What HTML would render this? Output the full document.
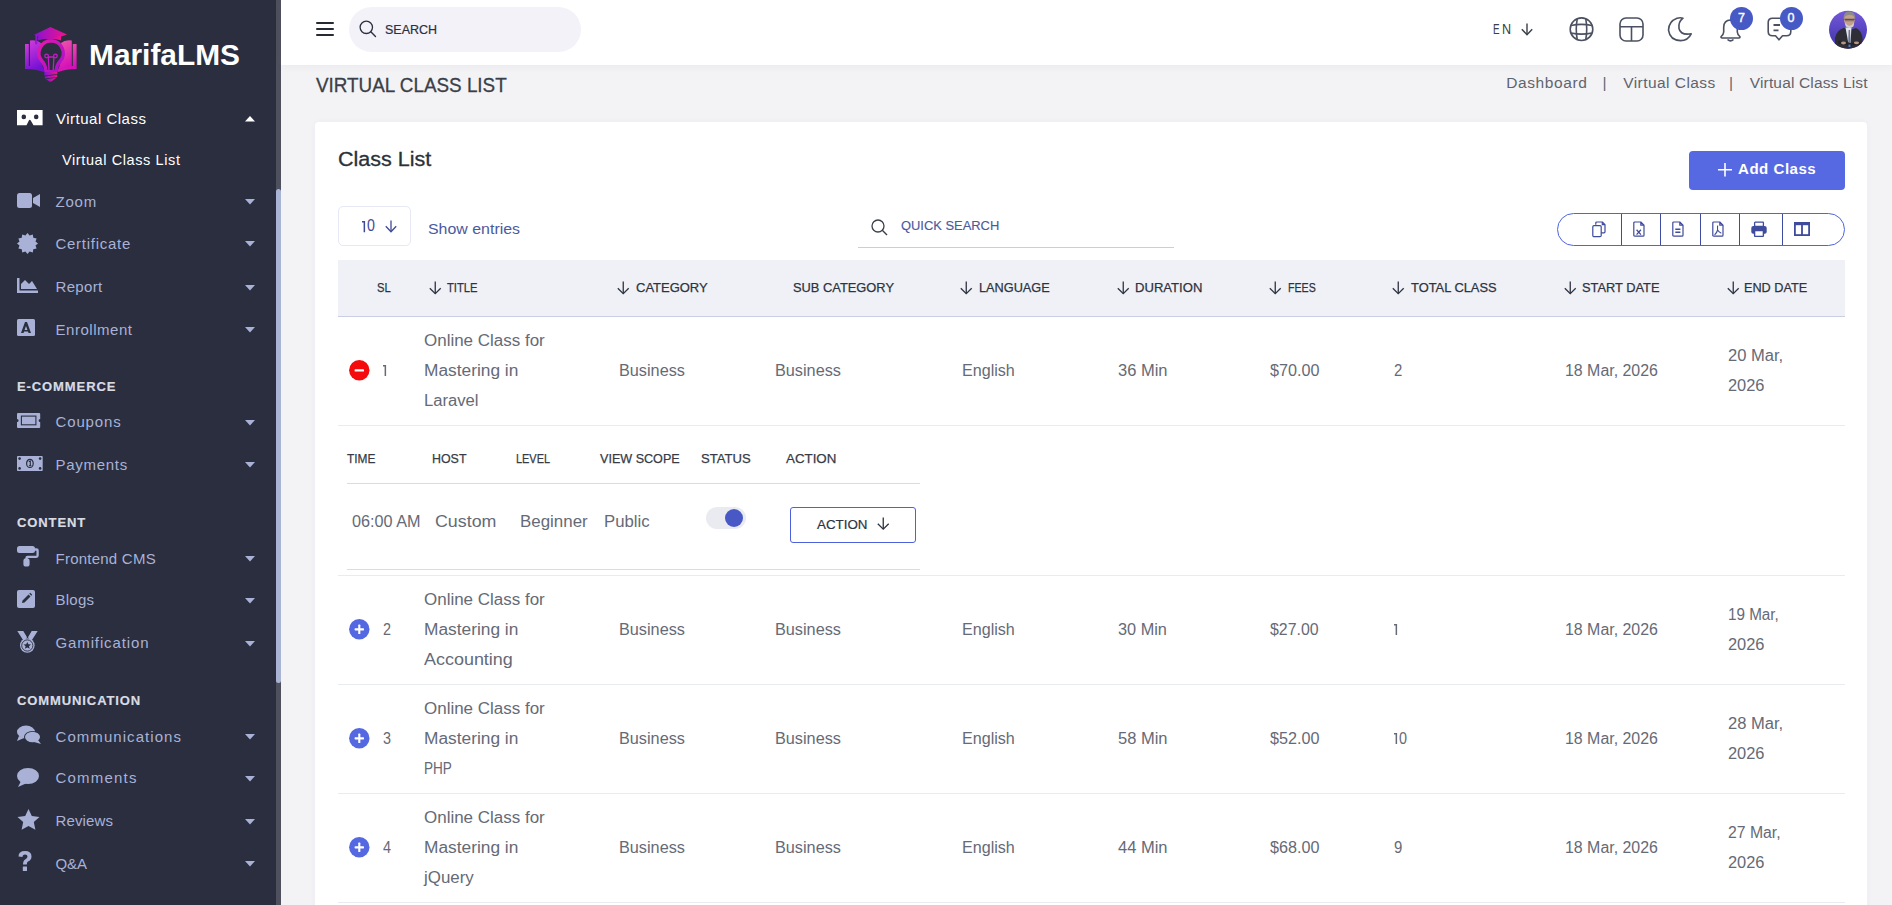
<!DOCTYPE html>
<html><head><meta charset="utf-8"><title>Virtual Class List</title>
<style>
html,body{margin:0;padding:0;}
body{width:1892px;height:905px;overflow:hidden;position:relative;background:#f3f3f6;font-family:"Liberation Sans",sans-serif;}
.t{position:absolute;line-height:1;white-space:nowrap;}
.b{position:absolute;}
svg.b{overflow:visible;}
</style></head><body>
<div class="b" style="left:0px;top:0px;width:276px;height:905px;background:#2a2e3f;"></div>
<div class="b" style="left:276px;top:0px;width:5px;height:905px;background:#4e515d;"></div>
<div class="b" style="left:276px;top:189px;width:5px;height:494px;background:#a9b3d4;border-radius:3px;"></div>
<svg class="b" style="left:20px;top:22px;" width="62" height="64" viewBox="0 0 62 64">
<defs>
<linearGradient id="lg1" x1="0" y1="0" x2="1" y2="0"><stop offset="0" stop-color="#8413d2"/><stop offset="1" stop-color="#f4128f"/></linearGradient>
<linearGradient id="lgL" x1="0" y1="0" x2="0.3" y2="1"><stop offset="0" stop-color="#d03bdc"/><stop offset="1" stop-color="#7410d4"/></linearGradient>
<linearGradient id="lgR" x1="0" y1="0" x2="0.3" y2="1"><stop offset="0" stop-color="#f45aa8"/><stop offset="1" stop-color="#d410b8"/></linearGradient>
<linearGradient id="lgB" x1="0" y1="0" x2="1" y2="1"><stop offset="0" stop-color="#e81aa8"/><stop offset="1" stop-color="#a012d0"/></linearGradient>
</defs>
<path d="M5 22 H8.8 V44 Q18 44 25 49 L24 50 Q16 47 5 47 Z" fill="url(#lgL)"/>
<path d="M56.6 22 H52.8 V44 Q43 44 37 49 L38 50 Q46 47 56.6 47 Z" fill="url(#lgR)"/>
<path d="M10 18.5 Q17 17.5 21 21 L21 38 Q22 45 25 49 Q18 45 10 45 Z" fill="url(#lgL)"/>
<path d="M51.8 18.5 Q45 17.5 41 21 L41 38 Q40 45 37 49 Q44 45 51.8 45 Z" fill="url(#lgR)"/>
<path d="M31.1 17.3 A13.8 13.8 0 0 1 41.5 40.2 Q38 44 37.5 50 H24.5 Q24 44 20.6 40.2 A13.8 13.8 0 0 1 31.1 17.3 Z" fill="url(#lgB)"/>
<path d="M31.1 20.8 A10.3 10.3 0 0 1 39 37.8 Q35 42 34.5 48 H27.5 Q27 42 23.2 37.8 A10.3 10.3 0 0 1 31.1 20.8 Z" fill="#2a2e3f"/>
<g fill="none" stroke="#c41cc8" stroke-width="1.3"><circle cx="26.6" cy="34" r="1.8"/><circle cx="35.4" cy="34" r="1.8"/><path d="M28.3 35 L29 48 M33.9 35 L33.2 48 M28.3 35 H33.9"/></g>
<path d="M24.4 50 H37.4 V52 L24.4 53.6 Z M24.8 54.4 L37.2 52.8 V55 L24.8 56.6 Z M26 57.2 L36.2 55.8 L31.5 59.5 L29.5 59.5 Z" fill="url(#lg1)"/>
<path d="M14.1 12.7 L30.4 5 L47 12.4 L30.4 18.5 Z" fill="url(#lg1)"/>
<path d="M17.5 13.5 V18.5 Q30 14.5 41 18.5 V13.5 L30.4 17.5 Z" fill="url(#lg1)"/>
<path d="M16.2 13 V20" stroke="#9a1ad0" stroke-width="1.4"/><ellipse cx="16.2" cy="20.5" rx="1.3" ry="2" fill="#9a1ad0"/>
</svg>
<span class="t" style="left:89.0px;top:39.61px;font-size:30px;color:#ffffff;font-weight:700;transform:scaleX(0.9954);transform-origin:0 0;">MarifaLMS</span>
<svg class="b" style="left:16.7px;top:109.8px;" width="26" height="16" viewBox="0 0 26 16"><path d="M0 0 H25.6 V15.2 H16.5 L13.6 10.3 Q12.8 9 12 10.3 L9.5 15.2 H0 Z" fill="#fff"/><circle cx="6.8" cy="6.9" r="2.3" fill="#2a2e3f"/><circle cx="19.2" cy="6.9" r="2.3" fill="#2a2e3f"/></svg>
<span class="t" style="left:56.0px;top:111.00px;font-size:15px;color:#ffffff;letter-spacing:0.5px;">Virtual Class</span>
<svg class="b" style="left:245px;top:115.5px;" width="10" height="6" viewBox="0 0 10 6"><path d="M0 5.5 L10 5.5 L5 0 Z" fill="#ffffff"/></svg>
<span class="t" style="left:62.0px;top:152.73px;font-size:14.5px;color:#ffffff;letter-spacing:0.6px;">Virtual Class List</span>
<span class="t" style="left:55.5px;top:194.00px;font-size:15px;color:#a9b2d6;letter-spacing:0.8px;">Zoom</span>
<svg class="b" style="left:245px;top:199.39999999999998px;" width="10" height="6" viewBox="0 0 10 6"><path d="M0 0 L10 0 L5 5.5 Z" fill="#a9b2d6"/></svg>
<svg class="b" style="left:17px;top:193px;" width="24" height="16" viewBox="0 0 24 16"><g fill="#a9b2d6"><rect x="0" y="0" width="15" height="15" rx="2.5"/><path d="M16 5 L23 1 V14 L16 10 Z"/></g></svg>
<span class="t" style="left:55.5px;top:236.00px;font-size:15px;color:#a9b2d6;letter-spacing:0.72px;">Certificate</span>
<svg class="b" style="left:245px;top:241.39999999999998px;" width="10" height="6" viewBox="0 0 10 6"><path d="M0 0 L10 0 L5 5.5 Z" fill="#a9b2d6"/></svg>
<svg class="b" style="left:17px;top:233px;" width="21" height="21" viewBox="0 0 21 21"><g fill="#a9b2d6"><path d="M10.5 0 L12.6 2.6 L15.8 1.5 L16.3 4.8 L19.6 5.4 L18.5 8.5 L21 10.5 L18.5 12.5 L19.6 15.6 L16.3 16.2 L15.8 19.5 L12.6 18.4 L10.5 21 L8.4 18.4 L5.2 19.5 L4.7 16.2 L1.4 15.6 L2.5 12.5 L0 10.5 L2.5 8.5 L1.4 5.4 L4.7 4.8 L5.2 1.5 L8.4 2.6 Z"/></g></svg>
<span class="t" style="left:55.5px;top:279.30px;font-size:15px;color:#a9b2d6;letter-spacing:0.35px;">Report</span>
<svg class="b" style="left:245px;top:284.7px;" width="10" height="6" viewBox="0 0 10 6"><path d="M0 0 L10 0 L5 5.5 Z" fill="#a9b2d6"/></svg>
<svg class="b" style="left:17px;top:278px;" width="21" height="15" viewBox="0 0 21 15"><g fill="#a9b2d6"><path d="M0 0 H2.5 V12.5 H21 V15 H0 Z"/><path d="M4 11 V6 L8 2 L12 6 L15 3 L20 11 Z"/></g></svg>
<span class="t" style="left:55.5px;top:321.50px;font-size:15px;color:#a9b2d6;letter-spacing:0.53px;">Enrollment</span>
<svg class="b" style="left:245px;top:326.9px;" width="10" height="6" viewBox="0 0 10 6"><path d="M0 0 L10 0 L5 5.5 Z" fill="#a9b2d6"/></svg>
<svg class="b" style="left:17px;top:319px;" width="18" height="18" viewBox="0 0 18 18"><g fill="#a9b2d6"><rect x="0" y="0" width="18" height="17" rx="1.5"/><path d="M4 14 L8 3 H10 L14 14 H11.5 L9 7 L6.5 14 Z M7 11 H11 V12.5 H7 Z" fill="#2a2e3f"/></g></svg>
<span class="t" style="left:55.5px;top:414.10px;font-size:15px;color:#a9b2d6;letter-spacing:0.86px;">Coupons</span>
<svg class="b" style="left:245px;top:419.5px;" width="10" height="6" viewBox="0 0 10 6"><path d="M0 0 L10 0 L5 5.5 Z" fill="#a9b2d6"/></svg>
<svg class="b" style="left:17px;top:413px;" width="24" height="16" viewBox="0 0 24 16"><g fill="#a9b2d6"><path d="M1 0 H22.2 Q23.2 0 23.2 1 V5.9 A1.6 1.6 0 0 0 23.2 9.1 V14 Q23.2 15 22.2 15 H1 Q0 15 0 14 V9.1 A1.6 1.6 0 0 0 0 5.9 V1 Q0 0 1 0 Z"/><rect x="4.4" y="3.1" width="14.5" height="8.7" fill="none" stroke="#2a2e3f" stroke-width="1.1"/></g></svg>
<span class="t" style="left:55.5px;top:456.90px;font-size:15px;color:#a9b2d6;letter-spacing:0.72px;">Payments</span>
<svg class="b" style="left:245px;top:462.3px;" width="10" height="6" viewBox="0 0 10 6"><path d="M0 0 L10 0 L5 5.5 Z" fill="#a9b2d6"/></svg>
<svg class="b" style="left:17px;top:456px;" width="26" height="16" viewBox="0 0 26 16"><g fill="#a9b2d6"><rect x="0" y="0" width="25.7" height="15" rx="0.8"/><g fill="#2a2e3f"><circle cx="2.6" cy="2.6" r="1.3"/><circle cx="23.1" cy="2.6" r="1.3"/><circle cx="2.6" cy="12.4" r="1.3"/><circle cx="23.1" cy="12.4" r="1.3"/></g><ellipse cx="12.9" cy="7.4" rx="3.3" ry="4.1" fill="none" stroke="#2a2e3f" stroke-width="1.2"/><path d="M11.8 5.6 L13.3 5 V9.8 M11.9 9.8 H14.4" fill="none" stroke="#2a2e3f" stroke-width="1.1"/></g></svg>
<span class="t" style="left:55.5px;top:550.50px;font-size:15px;color:#a9b2d6;letter-spacing:0.24px;">Frontend CMS</span>
<svg class="b" style="left:245px;top:555.9000000000001px;" width="10" height="6" viewBox="0 0 10 6"><path d="M0 0 L10 0 L5 5.5 Z" fill="#a9b2d6"/></svg>
<svg class="b" style="left:17px;top:546px;" width="22" height="22" viewBox="0 0 22 22"><g fill="#a9b2d6"><rect x="0" y="0" width="18" height="7" rx="2.5"/><path d="M17 3.5 H19.6 Q20.6 3.5 20.6 4.5 V9.5 Q20.6 10.8 19.3 10.8 H10.6 Q9.5 10.8 9.5 12 V13.5" stroke="#a9b2d6" stroke-width="2.3" fill="none"/><rect x="6.4" y="12.3" width="6.2" height="8.3" rx="2.6"/></g></svg>
<span class="t" style="left:55.5px;top:592.40px;font-size:15px;color:#a9b2d6;letter-spacing:0.25px;">Blogs</span>
<svg class="b" style="left:245px;top:597.8000000000001px;" width="10" height="6" viewBox="0 0 10 6"><path d="M0 0 L10 0 L5 5.5 Z" fill="#a9b2d6"/></svg>
<svg class="b" style="left:17px;top:590px;" width="18" height="18" viewBox="0 0 18 18"><g fill="#a9b2d6"><rect x="0" y="0" width="18" height="18" rx="2"/><path d="M5 13 L5.5 10.5 L11.5 4.5 L13.5 6.5 L7.5 12.5 Z M12.3 3.7 L13.2 2.8 L15.2 4.8 L14.3 5.7 Z" fill="#2a2e3f"/></g></svg>
<span class="t" style="left:55.5px;top:635.40px;font-size:15px;color:#a9b2d6;letter-spacing:0.88px;">Gamification</span>
<svg class="b" style="left:245px;top:640.8000000000001px;" width="10" height="6" viewBox="0 0 10 6"><path d="M0 0 L10 0 L5 5.5 Z" fill="#a9b2d6"/></svg>
<svg class="b" style="left:17px;top:631px;" width="21" height="22" viewBox="0 0 21 22"><g fill="#a9b2d6"><path d="M0.3 0 H6.3 L10 6.2 L8.6 8.3 Q7.2 8.6 6.2 9.3 Z"/><path d="M20.7 0 H14.7 L11 6.2 L12.4 8.3 Q13.8 8.6 14.8 9.3 Z"/><circle cx="10.3" cy="14.5" r="7.3"/><circle cx="10.3" cy="14.5" r="5.6" fill="none" stroke="#2a2e3f" stroke-width="0.9"/><path d="M10.3 10.9 L11.4 13.3 L14 13.5 L12 15.2 L12.7 17.8 L10.3 16.4 L7.9 17.8 L8.6 15.2 L6.6 13.5 L9.2 13.3 Z" fill="#2a2e3f"/></g></svg>
<span class="t" style="left:55.5px;top:728.50px;font-size:15px;color:#a9b2d6;letter-spacing:1.06px;">Communications</span>
<svg class="b" style="left:245px;top:733.9000000000001px;" width="10" height="6" viewBox="0 0 10 6"><path d="M0 0 L10 0 L5 5.5 Z" fill="#a9b2d6"/></svg>
<svg class="b" style="left:17px;top:725px;" width="24" height="19" viewBox="0 0 24 19"><g fill="#a9b2d6"><ellipse cx="9" cy="7" rx="9" ry="6.5"/><path d="M2 11 L0 16 L7 13 Z"/><ellipse cx="15.5" cy="12" rx="8.5" ry="6" fill="#2a2e3f"/><ellipse cx="15.5" cy="12" rx="7.5" ry="5.3"/><path d="M21 15 L24 19 L17 17 Z"/></g></svg>
<span class="t" style="left:55.5px;top:770.20px;font-size:15px;color:#a9b2d6;letter-spacing:1.2px;">Comments</span>
<svg class="b" style="left:245px;top:775.6px;" width="10" height="6" viewBox="0 0 10 6"><path d="M0 0 L10 0 L5 5.5 Z" fill="#a9b2d6"/></svg>
<svg class="b" style="left:17px;top:768px;" width="22" height="19" viewBox="0 0 22 19"><g fill="#a9b2d6"><ellipse cx="11" cy="8" rx="11" ry="8"/><path d="M4 13 L1 19 L10 15 Z"/></g></svg>
<span class="t" style="left:55.5px;top:813.40px;font-size:15px;color:#a9b2d6;letter-spacing:0.12px;">Reviews</span>
<svg class="b" style="left:245px;top:818.8000000000001px;" width="10" height="6" viewBox="0 0 10 6"><path d="M0 0 L10 0 L5 5.5 Z" fill="#a9b2d6"/></svg>
<svg class="b" style="left:17px;top:809px;" width="23" height="22" viewBox="0 0 23 22"><g fill="#a9b2d6"><path d="M11.5 0 L14.8 7 L22.5 7.9 L16.8 13.1 L18.4 20.8 L11.5 17 L4.6 20.8 L6.2 13.1 L0.5 7.9 L8.2 7 Z"/></g></svg>
<span class="t" style="left:55.5px;top:855.50px;font-size:15px;color:#a9b2d6;letter-spacing:-0.1px;">Q&amp;A</span>
<svg class="b" style="left:245px;top:860.9000000000001px;" width="10" height="6" viewBox="0 0 10 6"><path d="M0 0 L10 0 L5 5.5 Z" fill="#a9b2d6"/></svg>
<svg class="b" style="left:17.5px;top:851px;" width="14" height="21" viewBox="0 0 14 21"><g fill="#a9b2d6"><path d="M0.5 5.5 Q0.5 0 7 0 Q13.5 0 13.5 5.5 Q13.5 9 10 10.5 Q8.8 11.2 8.8 13.5 H5 Q5 9.5 7.5 8.3 Q9.5 7.3 9.5 5.5 Q9.5 3.5 7 3.5 Q4.5 3.5 4.5 6 Z"/><rect x="4.8" y="15.5" width="4.2" height="4.5" rx="0.5"/></g></svg>
<span class="t" style="left:17.0px;top:380.30px;font-size:13px;color:#d9dbe3;letter-spacing:0.9px;font-weight:700;-webkit-text-stroke:0.2px #d9dbe3;">E-COMMERCE</span>
<span class="t" style="left:17.0px;top:516.20px;font-size:13px;color:#d9dbe3;letter-spacing:0.9px;font-weight:700;-webkit-text-stroke:0.2px #d9dbe3;">CONTENT</span>
<span class="t" style="left:17.0px;top:694.20px;font-size:13px;color:#d9dbe3;letter-spacing:0.9px;font-weight:700;-webkit-text-stroke:0.2px #d9dbe3;">COMMUNICATION</span>
<div class="b" style="left:281px;top:0px;width:1611px;height:65px;background:#ffffff;box-shadow:0 1px 8px rgba(60,60,100,0.06);"></div>
<div class="b" style="left:316px;top:22px;width:18px;height:2.1999999999999993px;background:#252a33;border-radius:1px;"></div>
<div class="b" style="left:316px;top:28px;width:18px;height:2.1999999999999993px;background:#252a33;border-radius:1px;"></div>
<div class="b" style="left:316px;top:34px;width:18px;height:2.200000000000003px;background:#252a33;border-radius:1px;"></div>
<div class="b" style="left:349px;top:7px;width:232px;height:45px;background:#f3f2f9;border-radius:23px;"></div>
<svg class="b" style="left:359px;top:20px;" width="18" height="18" viewBox="0 0 18 18"><circle cx="7.3" cy="7.3" r="6.2" fill="none" stroke="#2b3040" stroke-width="1.3"/><path d="M11.8 11.8 L16.5 16.5" stroke="#2b3040" stroke-width="1.4" stroke-linecap="round"/></svg>
<span class="t" style="left:385.2px;top:23.10px;font-size:13px;color:#2b3040;-webkit-text-stroke:0.2px #2b3040;transform:scaleX(0.9594);transform-origin:0 0;">SEARCH</span>
<span class="t" style="left:1493.3px;top:20.78px;font-size:15.5px;color:#3a3f48;transform:scaleX(0.6377);transform-origin:0 0;">E</span>
<span class="t" style="left:1501.8px;top:20.78px;font-size:15.5px;color:#3a3f48;transform:scaleX(0.8125);transform-origin:0 0;">N</span>
<svg class="b" style="left:1521px;top:23px;" width="12" height="12.5" viewBox="0 0 12 12.5"><path d="M6.0 0.5 V11.5" stroke="#3a3f48" stroke-width="1.4" fill="none"/><path d="M0.8 6.2 L6.0 11.7 L11.2 6.2" stroke="#3a3f48" stroke-width="1.4" fill="none" stroke-linejoin="miter"/></svg>
<svg class="b" style="left:1569px;top:17px;" width="25" height="25" viewBox="0 0 25 25"><g fill="none" stroke="#4b5161" stroke-width="1.6"><circle cx="12.5" cy="12.2" r="11.3"/><path d="M2 8.5 Q12.5 6.2 23 8.5 M2 16 Q12.5 18.3 23 16"/><path d="M8.3 1.6 Q6.2 12.2 8.3 22.8 M16.7 1.6 Q18.8 12.2 16.7 22.8"/></g></svg>
<svg class="b" style="left:1619px;top:17px;" width="25" height="25" viewBox="0 0 25 25"><g fill="none" stroke="#4b5161" stroke-width="1.6"><rect x="1" y="1" width="23" height="23" rx="6"/><path d="M1 9.8 H24 M12.5 9.8 V24"/></g></svg>
<svg class="b" style="left:1667px;top:17px;" width="26" height="25" viewBox="0 0 26 25"><path d="M16 1.2 Q11 5 12 11.5 Q13.5 18.5 24.2 16.8 Q21 23.5 13.5 23.6 Q3 23.5 1.5 13.2 Q1.5 4.5 10 1.2 Q13.5 0.2 16 1.2 Z" fill="none" stroke="#4b5161" stroke-width="1.6" stroke-linejoin="round"/></svg>
<svg class="b" style="left:1720px;top:17px;" width="21" height="26" viewBox="0 0 21 26"><path d="M10.5 3 Q4 3.2 3.7 10 V15 Q3.5 17.5 1.2 19.5 Q0.5 20.8 2.2 21 H18.8 Q20.5 20.8 19.8 19.5 Q17.5 17.5 17.3 15 V10 Q17 3.2 10.5 3 Z" fill="none" stroke="#4b5161" stroke-width="1.6"/><path d="M7.5 22.5 Q10.5 25.2 13.5 22.5" fill="none" stroke="#4b5161" stroke-width="1.6"/></svg>
<div class="b" style="left:1730px;top:7px;width:23px;height:23px;background:#4659c4;border-radius:50%;"></div>
<span class="t" style="left:1738.0px;top:11.82px;font-size:12.5px;color:#ffffff;-webkit-text-stroke:0.4px #ffffff;">7</span>
<svg class="b" style="left:1767px;top:17px;" width="25" height="26" viewBox="0 0 25 26"><path d="M5.5 1.2 H19.5 Q23.8 1.2 23.8 5.5 V14.5 Q23.8 18.8 19.5 18.8 H15.5 L12 22.8 L8.5 18.8 H5.5 Q1.2 18.8 1.2 14.5 V5.5 Q1.2 1.2 5.5 1.2 Z" fill="none" stroke="#4b5161" stroke-width="1.6" stroke-linejoin="round"/><path d="M6.5 8 H13 M6.5 13.3 H11.5" stroke="#4b5161" stroke-width="1.8"/></svg>
<div class="b" style="left:1780px;top:7px;width:23px;height:23px;background:#4659c4;border-radius:50%;"></div>
<span class="t" style="left:1787.6px;top:11.82px;font-size:12.5px;color:#ffffff;-webkit-text-stroke:0.4px #ffffff;">0</span>
<svg class="b" style="left:1829px;top:10px;" width="39" height="39" viewBox="0 0 39 39"><defs><linearGradient id="av" x1="0" y1="0" x2="0" y2="1"><stop offset="0" stop-color="#7659dc"/><stop offset="1" stop-color="#3a31a5"/></linearGradient><clipPath id="avc"><circle cx="19" cy="19.75" r="19"/></clipPath></defs>
<g clip-path="url(#avc)"><rect width="39" height="40" fill="url(#av)"/>
<path d="M6 40 L6 28 Q7.5 20 15 17.8 L20.5 20 L27 18 Q32.5 20.5 33.5 28 L34 40 Z" fill="#2f2e36"/>
<path d="M16.5 17.5 L22.5 17.5 L21.5 33 L19.5 34 Z" fill="#e2e5ee"/><path d="M19.6 20 L21 20 L21.5 33 L20.3 35 L19.2 33 Z" fill="#6d7690"/>
<path d="M15 9 Q15 16.5 20.4 17.5 Q25.8 16.5 25.8 9 Q25.8 2.5 20.4 2.5 Q15 2.5 15 9 Z" fill="#c4a08c"/>
<path d="M14.6 9 Q14.3 1.5 20.5 1.6 Q26.5 1.8 26.3 9 Q25 4.8 20.5 5 Q16.2 4.8 14.6 9 Z" fill="#8e8a86"/>
<path d="M15.5 9.3 H25.7" stroke="#3a3a42" stroke-width="1"/><rect x="16" y="9.5" width="9" height="1.8" fill="#6a5a55" opacity="0.6"/>
<path d="M16.2 12.5 Q20.4 19.5 25 12.5 L24.6 16.2 Q20.4 19.8 16.6 16.2 Z" fill="#d2d2d2"/>
<path d="M9 31 Q15 30 21 33 L31 31.5 L32 34 L21 36 Q14 33.5 9.5 34 Z" fill="#24232a"/>
<ellipse cx="27.5" cy="32.8" rx="2.6" ry="1.4" fill="#b89582"/><ellipse cx="14.5" cy="33" rx="2.5" ry="1.4" fill="#b89582"/>
<rect x="19.5" y="34.5" width="2" height="2.5" fill="#4d7fc4"/></g></svg>
<span class="t" style="left:315.5px;top:75.17px;font-size:20px;color:#3b3f47;-webkit-text-stroke:0.3px #3b3f47;transform:scaleX(0.9427);transform-origin:0 0;">VIRTUAL CLASS LIST</span>
<span class="t" style="left:1506.2px;top:75.28px;font-size:15.5px;color:#5f646d;letter-spacing:0.6px;">Dashboard</span>
<span class="t" style="left:1602.5px;top:75.28px;font-size:15.5px;color:#5f646d;">|</span>
<span class="t" style="left:1623.2px;top:75.28px;font-size:15.5px;color:#5f646d;letter-spacing:0.45px;">Virtual Class</span>
<span class="t" style="left:1729.0px;top:75.28px;font-size:15.5px;color:#5f646d;">|</span>
<span class="t" style="left:1749.8px;top:75.28px;font-size:15.5px;color:#5f646d;letter-spacing:0.15px;">Virtual Class List</span>
<div class="b" style="left:315px;top:122px;width:1552px;height:828px;background:#ffffff;border-radius:4px;box-shadow:0 0 6px rgba(80,80,120,0.04);"></div>
<span class="t" style="left:338.0px;top:149.17px;font-size:20px;color:#2b3138;-webkit-text-stroke:0.3px #2b3138;transform:scaleX(1.0761);transform-origin:0 0;">Class List</span>
<div class="b" style="left:1689px;top:151px;width:156px;height:39px;background:#5669e2;border-radius:4px;"></div>
<svg class="b" style="left:1718px;top:163px;" width="14" height="14" viewBox="0 0 14 14"><path d="M7 0 V13.5 M0 6.8 H14" stroke="#fff" stroke-width="1.6"/></svg>
<span class="t" style="left:1738.0px;top:161.93px;font-size:14.5px;color:#ffffff;letter-spacing:0.5px;font-weight:700;transform:scaleX(1.0374);transform-origin:0 0;">Add Class</span>
<div class="b" style="left:338px;top:206px;width:73px;height:40px;background:#ffffff;box-sizing:border-box;border:1px solid #e6e9f3;border-radius:5px;"></div>
<svg class="b" style="left:361.5px;top:220.60000000000002px;" width="4" height="11.2" viewBox="0 0 4 11.2"><path d="M0 0.1 H3.1 V11.2 H1.6 V1.4 H0 Z" fill="#3e4a96"/></svg>
<span class="t" style="left:367.1px;top:218.26px;font-size:16px;color:#3e4a96;transform:scaleX(0.8876);transform-origin:0 0;">0</span>
<svg class="b" style="left:385px;top:219.5px;" width="12" height="12.5" viewBox="0 0 12 12.5"><path d="M6.0 0.5 V11.5" stroke="#3e4a96" stroke-width="1.3" fill="none"/><path d="M0.8 6.2 L6.0 11.7 L11.2 6.2" stroke="#3e4a96" stroke-width="1.3" fill="none" stroke-linejoin="miter"/></svg>
<span class="t" style="left:428.0px;top:221.63px;font-size:14.5px;color:#4b5a9e;transform:scaleX(1.0979);transform-origin:0 0;">Show entries</span>
<svg class="b" style="left:871px;top:219px;" width="17" height="17" viewBox="0 0 17 17"><circle cx="7" cy="7" r="6" fill="none" stroke="#3b3f47" stroke-width="1.3"/><path d="M11.3 11.3 L16 16" stroke="#3b3f47" stroke-width="1.4"/></svg>
<span class="t" style="left:901.0px;top:218.77px;font-size:13.5px;color:#4b5a9e;-webkit-text-stroke:0.15px #4b5a9e;transform:scaleX(0.9562);transform-origin:0 0;">QUICK SEARCH</span>
<div class="b" style="left:858px;top:247px;width:316px;height:1px;background:#c9cde3;"></div>
<div class="b" style="left:1557px;top:213px;width:288px;height:33px;background:transparent;box-sizing:border-box;border:1px solid #5064dc;border-radius:17px;"></div>
<div class="b" style="left:1621px;top:214px;width:1px;height:31px;background:#3f4b9c;"></div>
<div class="b" style="left:1660px;top:214px;width:1px;height:31px;background:#3f4b9c;"></div>
<div class="b" style="left:1700px;top:214px;width:1px;height:31px;background:#3f4b9c;"></div>
<div class="b" style="left:1739px;top:214px;width:1px;height:31px;background:#3f4b9c;"></div>
<div class="b" style="left:1782px;top:214px;width:1px;height:31px;background:#3f4b9c;"></div>
<svg class="b" style="left:1592px;top:221px;" width="14" height="16" viewBox="0 0 14 16"><g fill="none" stroke="#3f4b9c" stroke-width="1.2" stroke-linejoin="round"><path d="M3.8 3.8 V2 Q3.8 1 4.8 1 H10.3 L13 3.7 V10.8 Q13 11.8 12 11.8 H9.2"/><path d="M10.3 1 V3.7 H13"/><rect x="0.8" y="4.6" width="8.4" height="11" rx="1.2"/></g></svg>
<svg class="b" style="left:1633px;top:221px;" width="12" height="16" viewBox="0 0 12 16"><path d="M1.8 1 H7.8 L11 4.2 V14.2 Q11 15.2 10 15.2 H1.8 Q0.8 15.2 0.8 14.2 V2 Q0.8 1 1.8 1 Z M7.8 1 V4.2 H11" fill="none" stroke="#3f4b9c" stroke-width="1.2" stroke-linejoin="round"/><path d="M3.6 8.8 L7.9 13.6 M7.9 8.8 L3.6 13.6" stroke="#3f4b9c" stroke-width="1.3"/></svg>
<svg class="b" style="left:1672px;top:221px;" width="12" height="16" viewBox="0 0 12 16"><path d="M1.8 1 H7.8 L11 4.2 V14.2 Q11 15.2 10 15.2 H1.8 Q0.8 15.2 0.8 14.2 V2 Q0.8 1 1.8 1 Z M7.8 1 V4.2 H11" fill="none" stroke="#3f4b9c" stroke-width="1.2" stroke-linejoin="round"/><path d="M3.3 8.3 H8.4 M3.3 11.2 H8.4" stroke="#3f4b9c" stroke-width="1.4"/></svg>
<svg class="b" style="left:1712px;top:221px;" width="12" height="16" viewBox="0 0 12 16"><path d="M1.8 1 H7.8 L11 4.2 V14.2 Q11 15.2 10 15.2 H1.8 Q0.8 15.2 0.8 14.2 V2 Q0.8 1 1.8 1 Z M7.8 1 V4.2 H11" fill="none" stroke="#3f4b9c" stroke-width="1.2" stroke-linejoin="round"/><path d="M5.6 4.5 Q5.4 8 5.6 9 Q5 11.5 2.6 13.8 M5.6 9 Q7 11.3 9.3 12.2" fill="none" stroke="#3f4b9c" stroke-width="1.1"/></svg>
<svg class="b" style="left:1751px;top:221px;" width="16" height="16" viewBox="0 0 16 16"><rect x="3.6" y="1.2" width="8.8" height="4.2" rx="0.6" fill="none" stroke="#3f4b9c" stroke-width="1.3"/><rect x="0.3" y="5" width="15.4" height="7.8" rx="2" fill="#3f4b9c"/><rect x="3.6" y="9.6" width="8.8" height="5.8" rx="0.6" fill="#fff" stroke="#3f4b9c" stroke-width="1.4"/></svg>
<svg class="b" style="left:1794px;top:222px;" width="16" height="14" viewBox="0 0 16 14"><rect x="0.9" y="0.9" width="14.2" height="12.2" fill="none" stroke="#3f4b9c" stroke-width="1.8"/><rect x="0" y="0" width="16" height="3.2" fill="#3f4b9c"/><path d="M8 1 V13" stroke="#3f4b9c" stroke-width="1.8"/></svg>
<div class="b" style="left:338px;top:260px;width:1507px;height:56px;background:#eff1f6;"></div>
<div class="b" style="left:338px;top:316px;width:1507px;height:1px;background:#c9cee3;"></div>
<span class="t" style="left:377.0px;top:280.97px;font-size:13.5px;color:#2d3340;-webkit-text-stroke:0.25px #2d3340;transform:scaleX(0.8333);transform-origin:0 0;">SL</span>
<svg class="b" style="left:429.3px;top:281px;" width="12.5" height="13.5" viewBox="0 0 12.5 13.5"><path d="M6.25 0.5 V12.5" stroke="#2d3340" stroke-width="1.3" fill="none"/><path d="M0.8 7.2 L6.25 12.7 L11.7 7.2" stroke="#2d3340" stroke-width="1.3" fill="none" stroke-linejoin="miter"/></svg>
<span class="t" style="left:446.8px;top:280.97px;font-size:13.5px;color:#2d3340;-webkit-text-stroke:0.25px #2d3340;transform:scaleX(0.8313);transform-origin:0 0;">TITLE</span>
<svg class="b" style="left:617.2px;top:281px;" width="12.5" height="13.5" viewBox="0 0 12.5 13.5"><path d="M6.25 0.5 V12.5" stroke="#2d3340" stroke-width="1.3" fill="none"/><path d="M0.8 7.2 L6.25 12.7 L11.7 7.2" stroke="#2d3340" stroke-width="1.3" fill="none" stroke-linejoin="miter"/></svg>
<span class="t" style="left:635.6px;top:280.97px;font-size:13.5px;color:#2d3340;-webkit-text-stroke:0.25px #2d3340;transform:scaleX(0.9617);transform-origin:0 0;">CATEGORY</span>
<span class="t" style="left:792.5px;top:280.97px;font-size:13.5px;color:#2d3340;-webkit-text-stroke:0.25px #2d3340;transform:scaleX(0.9524);transform-origin:0 0;">SUB CATEGORY</span>
<svg class="b" style="left:960.3px;top:281px;" width="12.5" height="13.5" viewBox="0 0 12.5 13.5"><path d="M6.25 0.5 V12.5" stroke="#2d3340" stroke-width="1.3" fill="none"/><path d="M0.8 7.2 L6.25 12.7 L11.7 7.2" stroke="#2d3340" stroke-width="1.3" fill="none" stroke-linejoin="miter"/></svg>
<span class="t" style="left:978.6px;top:280.97px;font-size:13.5px;color:#2d3340;-webkit-text-stroke:0.25px #2d3340;transform:scaleX(0.9433);transform-origin:0 0;">LANGUAGE</span>
<svg class="b" style="left:1116.7px;top:281px;" width="12.5" height="13.5" viewBox="0 0 12.5 13.5"><path d="M6.25 0.5 V12.5" stroke="#2d3340" stroke-width="1.3" fill="none"/><path d="M0.8 7.2 L6.25 12.7 L11.7 7.2" stroke="#2d3340" stroke-width="1.3" fill="none" stroke-linejoin="miter"/></svg>
<span class="t" style="left:1134.7px;top:280.97px;font-size:13.5px;color:#2d3340;-webkit-text-stroke:0.25px #2d3340;transform:scaleX(0.9691);transform-origin:0 0;">DURATION</span>
<svg class="b" style="left:1268.9px;top:281px;" width="12.5" height="13.5" viewBox="0 0 12.5 13.5"><path d="M6.25 0.5 V12.5" stroke="#2d3340" stroke-width="1.3" fill="none"/><path d="M0.8 7.2 L6.25 12.7 L11.7 7.2" stroke="#2d3340" stroke-width="1.3" fill="none" stroke-linejoin="miter"/></svg>
<span class="t" style="left:1287.9px;top:280.97px;font-size:13.5px;color:#2d3340;-webkit-text-stroke:0.25px #2d3340;transform:scaleX(0.7872);transform-origin:0 0;">FEES</span>
<svg class="b" style="left:1392.4px;top:281px;" width="12.5" height="13.5" viewBox="0 0 12.5 13.5"><path d="M6.25 0.5 V12.5" stroke="#2d3340" stroke-width="1.3" fill="none"/><path d="M0.8 7.2 L6.25 12.7 L11.7 7.2" stroke="#2d3340" stroke-width="1.3" fill="none" stroke-linejoin="miter"/></svg>
<span class="t" style="left:1410.9px;top:280.97px;font-size:13.5px;color:#2d3340;-webkit-text-stroke:0.25px #2d3340;transform:scaleX(0.9538);transform-origin:0 0;">TOTAL CLASS</span>
<svg class="b" style="left:1563.6px;top:281px;" width="12.5" height="13.5" viewBox="0 0 12.5 13.5"><path d="M6.25 0.5 V12.5" stroke="#2d3340" stroke-width="1.3" fill="none"/><path d="M0.8 7.2 L6.25 12.7 L11.7 7.2" stroke="#2d3340" stroke-width="1.3" fill="none" stroke-linejoin="miter"/></svg>
<span class="t" style="left:1582.0px;top:280.97px;font-size:13.5px;color:#2d3340;-webkit-text-stroke:0.25px #2d3340;transform:scaleX(0.9503);transform-origin:0 0;">START DATE</span>
<svg class="b" style="left:1726.5px;top:281px;" width="12.5" height="13.5" viewBox="0 0 12.5 13.5"><path d="M6.25 0.5 V12.5" stroke="#2d3340" stroke-width="1.3" fill="none"/><path d="M0.8 7.2 L6.25 12.7 L11.7 7.2" stroke="#2d3340" stroke-width="1.3" fill="none" stroke-linejoin="miter"/></svg>
<span class="t" style="left:1744.3px;top:280.97px;font-size:13.5px;color:#2d3340;-webkit-text-stroke:0.25px #2d3340;transform:scaleX(0.9390);transform-origin:0 0;">END DATE</span>
<svg class="b" style="left:349px;top:360px;" width="21" height="21" viewBox="0 0 21 21"><circle cx="10.3" cy="10.3" r="10.2" fill="#f40b0b"/><rect x="5.6" y="9.3" width="9.4" height="2.2" rx="0.6" fill="#fff"/></svg>
<svg class="b" style="left:382.9px;top:365.2px;" width="4" height="11" viewBox="0 0 4 11"><path d="M0 0.1 H3.1 V11 H1.6 V1.4 H0 Z" fill="#656a76"/></svg>
<span class="t" style="left:424.0px;top:332.66px;font-size:16px;color:#656a76;transform:scaleX(1.0606);transform-origin:0 0;">Online Class for</span>
<span class="t" style="left:424.0px;top:362.66px;font-size:16px;color:#656a76;transform:scaleX(1.0820);transform-origin:0 0;">Mastering in</span>
<span class="t" style="left:424.0px;top:392.66px;font-size:16px;color:#656a76;transform:scaleX(1.0381);transform-origin:0 0;">Laravel</span>
<span class="t" style="left:619.0px;top:362.66px;font-size:16px;color:#656a76;transform:scaleX(1.0154);transform-origin:0 0;">Business</span>
<span class="t" style="left:775.4px;top:362.66px;font-size:16px;color:#656a76;transform:scaleX(1.0154);transform-origin:0 0;">Business</span>
<span class="t" style="left:961.7px;top:362.66px;font-size:16px;color:#656a76;transform:scaleX(1.0057);transform-origin:0 0;">English</span>
<span class="t" style="left:1118.1px;top:362.66px;font-size:16px;color:#656a76;transform:scaleX(1.0312);transform-origin:0 0;">36 Min</span>
<span class="t" style="left:1270.4px;top:362.66px;font-size:16px;color:#656a76;transform:scaleX(1.0112);transform-origin:0 0;">$70.00</span>
<span class="t" style="left:1393.8px;top:362.66px;font-size:16px;color:#656a76;transform:scaleX(0.9326);transform-origin:0 0;">2</span>
<span class="t" style="left:1564.8px;top:362.66px;font-size:16px;color:#656a76;transform:scaleX(0.9946);transform-origin:0 0;">18 Mar, 2026</span>
<span class="t" style="left:1728.4px;top:347.66px;font-size:16px;color:#656a76;transform:scaleX(1.0347);transform-origin:0 0;">20 Mar,</span>
<span class="t" style="left:1728.4px;top:377.66px;font-size:16px;color:#656a76;transform:scaleX(1.0253);transform-origin:0 0;">2026</span>
<div class="b" style="left:338px;top:425px;width:1507px;height:1px;background:#e9ebf2;"></div>
<span class="t" style="left:347.2px;top:451.77px;font-size:13.5px;color:#363b46;-webkit-text-stroke:0.25px #363b46;transform:scaleX(0.8822);transform-origin:0 0;">TIME</span>
<span class="t" style="left:431.5px;top:451.77px;font-size:13.5px;color:#363b46;-webkit-text-stroke:0.25px #363b46;transform:scaleX(0.9187);transform-origin:0 0;">HOST</span>
<span class="t" style="left:515.9px;top:451.77px;font-size:13.5px;color:#363b46;-webkit-text-stroke:0.25px #363b46;transform:scaleX(0.8098);transform-origin:0 0;">LEVEL</span>
<span class="t" style="left:600.3px;top:451.77px;font-size:13.5px;color:#363b46;-webkit-text-stroke:0.25px #363b46;transform:scaleX(0.9316);transform-origin:0 0;">VIEW SCOPE</span>
<span class="t" style="left:701.4px;top:451.77px;font-size:13.5px;color:#363b46;-webkit-text-stroke:0.25px #363b46;transform:scaleX(0.9688);transform-origin:0 0;">STATUS</span>
<span class="t" style="left:785.8px;top:451.77px;font-size:13.5px;color:#363b46;-webkit-text-stroke:0.25px #363b46;transform:scaleX(0.9873);transform-origin:0 0;">ACTION</span>
<div class="b" style="left:347px;top:483px;width:573px;height:1px;background:#d8dbe8;"></div>
<span class="t" style="left:351.6px;top:514.46px;font-size:16px;color:#656a76;transform:scaleX(1.0133);transform-origin:0 0;">06:00 AM</span>
<span class="t" style="left:435.4px;top:514.46px;font-size:16px;color:#656a76;transform:scaleX(1.1133);transform-origin:0 0;">Custom</span>
<span class="t" style="left:520.1px;top:514.46px;font-size:16px;color:#656a76;transform:scaleX(1.0570);transform-origin:0 0;">Beginner</span>
<span class="t" style="left:604.0px;top:514.46px;font-size:16px;color:#656a76;transform:scaleX(1.0459);transform-origin:0 0;">Public</span>
<div class="b" style="left:706px;top:507px;width:40px;height:22px;background:#eaeaf1;border-radius:11px;"></div>
<div class="b" style="left:724.5px;top:509px;width:18.0px;height:18px;background:#4859c6;border-radius:50%;"></div>
<div class="b" style="left:790px;top:507px;width:126px;height:36px;background:#ffffff;box-sizing:border-box;border:1px solid #4d61dc;border-radius:3px;"></div>
<span class="t" style="left:817.2px;top:517.57px;font-size:13.5px;color:#2d3340;-webkit-text-stroke:0.2px #2d3340;transform:scaleX(0.9902);transform-origin:0 0;">ACTION</span>
<svg class="b" style="left:876.5px;top:516.5px;" width="12.5" height="13" viewBox="0 0 12.5 13"><path d="M6.25 0.5 V12" stroke="#2d3340" stroke-width="1.3" fill="none"/><path d="M0.8 6.7 L6.25 12.2 L11.7 6.7" stroke="#2d3340" stroke-width="1.3" fill="none" stroke-linejoin="miter"/></svg>
<div class="b" style="left:347px;top:569px;width:573px;height:1px;background:#d8dbe8;"></div>
<div class="b" style="left:338px;top:575px;width:1507px;height:1px;background:#e9ebf2;"></div>
<svg class="b" style="left:349px;top:619px;" width="21" height="21" viewBox="0 0 21 21"><circle cx="10.3" cy="10.3" r="10.2" fill="#5468e1"/><rect x="5.6" y="9.3" width="9.4" height="2.1" rx="0.6" fill="#fff"/><rect x="9.25" y="5.6" width="2.1" height="9.4" rx="0.6" fill="#fff"/></svg>
<span class="t" style="left:382.8px;top:621.66px;font-size:16px;color:#656a76;transform:scaleX(0.8989);transform-origin:0 0;">2</span>
<span class="t" style="left:424.0px;top:591.66px;font-size:16px;color:#656a76;transform:scaleX(1.0606);transform-origin:0 0;">Online Class for</span>
<span class="t" style="left:424.0px;top:621.66px;font-size:16px;color:#656a76;transform:scaleX(1.0820);transform-origin:0 0;">Mastering in</span>
<span class="t" style="left:424.0px;top:651.66px;font-size:16px;color:#656a76;transform:scaleX(1.1219);transform-origin:0 0;">Accounting</span>
<span class="t" style="left:619.0px;top:621.66px;font-size:16px;color:#656a76;transform:scaleX(1.0154);transform-origin:0 0;">Business</span>
<span class="t" style="left:775.4px;top:621.66px;font-size:16px;color:#656a76;transform:scaleX(1.0154);transform-origin:0 0;">Business</span>
<span class="t" style="left:961.7px;top:621.66px;font-size:16px;color:#656a76;transform:scaleX(1.0057);transform-origin:0 0;">English</span>
<span class="t" style="left:1118.1px;top:621.66px;font-size:16px;color:#656a76;transform:scaleX(1.0188);transform-origin:0 0;">30 Min</span>
<span class="t" style="left:1270.4px;top:621.66px;font-size:16px;color:#656a76;transform:scaleX(0.9928);transform-origin:0 0;">$27.00</span>
<svg class="b" style="left:1394px;top:624.2px;" width="4" height="11" viewBox="0 0 4 11"><path d="M0 0.1 H3.1 V11 H1.6 V1.4 H0 Z" fill="#656a76"/></svg>
<span class="t" style="left:1564.8px;top:621.66px;font-size:16px;color:#656a76;transform:scaleX(0.9946);transform-origin:0 0;">18 Mar, 2026</span>
<span class="t" style="left:1728.4px;top:606.66px;font-size:16px;color:#656a76;transform:scaleX(0.9522);transform-origin:0 0;">19 Mar,</span>
<span class="t" style="left:1728.4px;top:636.66px;font-size:16px;color:#656a76;transform:scaleX(1.0253);transform-origin:0 0;">2026</span>
<div class="b" style="left:338px;top:684px;width:1507px;height:1px;background:#e9ebf2;"></div>
<svg class="b" style="left:349px;top:728px;" width="21" height="21" viewBox="0 0 21 21"><circle cx="10.3" cy="10.3" r="10.2" fill="#5468e1"/><rect x="5.6" y="9.3" width="9.4" height="2.1" rx="0.6" fill="#fff"/><rect x="9.25" y="5.6" width="2.1" height="9.4" rx="0.6" fill="#fff"/></svg>
<span class="t" style="left:382.8px;top:730.66px;font-size:16px;color:#656a76;transform:scaleX(0.8989);transform-origin:0 0;">3</span>
<span class="t" style="left:424.0px;top:700.66px;font-size:16px;color:#656a76;transform:scaleX(1.0606);transform-origin:0 0;">Online Class for</span>
<span class="t" style="left:424.0px;top:730.66px;font-size:16px;color:#656a76;transform:scaleX(1.0820);transform-origin:0 0;">Mastering in</span>
<span class="t" style="left:424.0px;top:760.66px;font-size:16px;color:#656a76;transform:scaleX(0.8480);transform-origin:0 0;">PHP</span>
<span class="t" style="left:619.0px;top:730.66px;font-size:16px;color:#656a76;transform:scaleX(1.0154);transform-origin:0 0;">Business</span>
<span class="t" style="left:775.4px;top:730.66px;font-size:16px;color:#656a76;transform:scaleX(1.0154);transform-origin:0 0;">Business</span>
<span class="t" style="left:961.7px;top:730.66px;font-size:16px;color:#656a76;transform:scaleX(1.0057);transform-origin:0 0;">English</span>
<span class="t" style="left:1118.1px;top:730.66px;font-size:16px;color:#656a76;transform:scaleX(1.0312);transform-origin:0 0;">58 Min</span>
<span class="t" style="left:1270.4px;top:730.66px;font-size:16px;color:#656a76;transform:scaleX(1.0112);transform-origin:0 0;">$52.00</span>
<svg class="b" style="left:1394px;top:733.2px;" width="4" height="11" viewBox="0 0 4 11"><path d="M0 0.1 H3.1 V11 H1.6 V1.4 H0 Z" fill="#656a76"/></svg>
<span class="t" style="left:1399.1px;top:730.66px;font-size:16px;color:#656a76;transform:scaleX(0.8989);transform-origin:0 0;">0</span>
<span class="t" style="left:1564.8px;top:730.66px;font-size:16px;color:#656a76;transform:scaleX(0.9946);transform-origin:0 0;">18 Mar, 2026</span>
<span class="t" style="left:1728.4px;top:715.66px;font-size:16px;color:#656a76;transform:scaleX(1.0347);transform-origin:0 0;">28 Mar,</span>
<span class="t" style="left:1728.4px;top:745.66px;font-size:16px;color:#656a76;transform:scaleX(1.0253);transform-origin:0 0;">2026</span>
<div class="b" style="left:338px;top:793px;width:1507px;height:1px;background:#e9ebf2;"></div>
<svg class="b" style="left:349px;top:837px;" width="21" height="21" viewBox="0 0 21 21"><circle cx="10.3" cy="10.3" r="10.2" fill="#5468e1"/><rect x="5.6" y="9.3" width="9.4" height="2.1" rx="0.6" fill="#fff"/><rect x="9.25" y="5.6" width="2.1" height="9.4" rx="0.6" fill="#fff"/></svg>
<span class="t" style="left:382.8px;top:839.66px;font-size:16px;color:#656a76;transform:scaleX(0.8989);transform-origin:0 0;">4</span>
<span class="t" style="left:424.0px;top:809.66px;font-size:16px;color:#656a76;transform:scaleX(1.0606);transform-origin:0 0;">Online Class for</span>
<span class="t" style="left:424.0px;top:839.66px;font-size:16px;color:#656a76;transform:scaleX(1.0820);transform-origin:0 0;">Mastering in</span>
<span class="t" style="left:424.0px;top:869.66px;font-size:16px;color:#656a76;transform:scaleX(1.0557);transform-origin:0 0;">jQuery</span>
<span class="t" style="left:619.0px;top:839.66px;font-size:16px;color:#656a76;transform:scaleX(1.0154);transform-origin:0 0;">Business</span>
<span class="t" style="left:775.4px;top:839.66px;font-size:16px;color:#656a76;transform:scaleX(1.0154);transform-origin:0 0;">Business</span>
<span class="t" style="left:961.7px;top:839.66px;font-size:16px;color:#656a76;transform:scaleX(1.0057);transform-origin:0 0;">English</span>
<span class="t" style="left:1118.1px;top:839.66px;font-size:16px;color:#656a76;transform:scaleX(1.0312);transform-origin:0 0;">44 Min</span>
<span class="t" style="left:1270.4px;top:839.66px;font-size:16px;color:#656a76;transform:scaleX(1.0112);transform-origin:0 0;">$68.00</span>
<span class="t" style="left:1393.8px;top:839.66px;font-size:16px;color:#656a76;transform:scaleX(0.9326);transform-origin:0 0;">9</span>
<span class="t" style="left:1564.8px;top:839.66px;font-size:16px;color:#656a76;transform:scaleX(0.9946);transform-origin:0 0;">18 Mar, 2026</span>
<span class="t" style="left:1728.4px;top:824.66px;font-size:16px;color:#656a76;transform:scaleX(0.9859);transform-origin:0 0;">27 Mar,</span>
<span class="t" style="left:1728.4px;top:854.66px;font-size:16px;color:#656a76;transform:scaleX(1.0253);transform-origin:0 0;">2026</span>
<div class="b" style="left:338px;top:902px;width:1507px;height:1px;background:#e9ebf2;"></div>
</body></html>
